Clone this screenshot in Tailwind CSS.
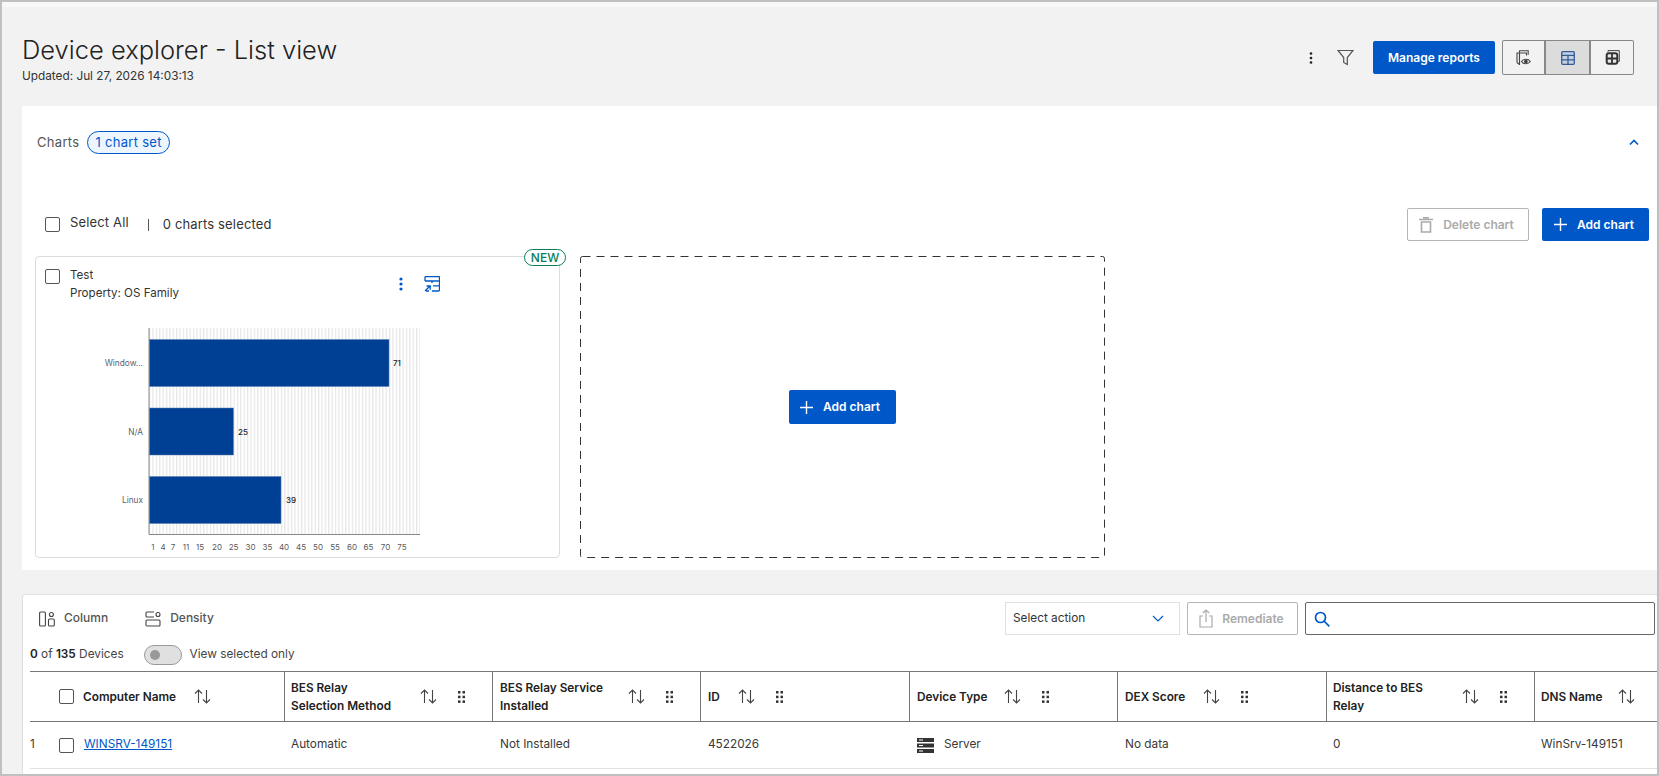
<!DOCTYPE html>
<html><head><meta charset="utf-8"><script src="https://cdn.jsdelivr.net/npm/@tailwindcss/browser@4"></script></head>
<body class="font-['Inter',sans-serif] text-[#333] overflow-hidden">
<div class="w-[1659px] h-[776px] border-2 border-[#c0c0c0] bg-[#f2f2f2] overflow-hidden">
  <div class="h-[5px] bg-[#f8f8f8]"></div>
  <header class="h-[99px] pl-5 pr-[23px] flex items-start justify-between">
    <div class="pt-[27px]">
      <h1 class="text-[25.500px] leading-8 font-light text-[#222]">Device explorer - List view</h1>
      <p class="mt-[2px] text-[11.800px] leading-4 text-[#333]">Updated: Jul 27, 2026 14:03:13</p>
    </div>
    <div class="mt-[33px] h-[35px] flex items-center">
      <svg class="w-4 h-4 mr-[18px]" viewBox="0 0 16 16" fill="#222"><circle cx="8" cy="3.500" r="1.300"/><circle cx="8" cy="8" r="1.300"/><circle cx="8" cy="12.500" r="1.300"/></svg>
      <svg class="w-[17px] h-[17px] mr-[19px]" viewBox="0 0 17 17" fill="none" stroke="#555" stroke-width="1.200"><path d="M1 1.500h15l-5.700 7v7l-3.600-2v-5z"/></svg>
      <button class="w-[122px] h-[33px] rounded-[2px] bg-[#0058c8] text-white text-xs font-semibold mr-[7px]">Manage reports</button>
      <div class="flex h-[35px]">
        <div class="w-[44px] border border-r-2 border-[#888] rounded-l-[2px] flex items-center justify-center"><svg class="w-[15px] h-[15px]" viewBox="0 0 15 15" fill="none" stroke="#444" stroke-width="1.100"><path d="M3.500 2.800V.8h8.700v4"/><path d="M1 12.500V3h9.500v2.500M1 12.500l2.500 2V3"/><path d="M5.500 11.500c1.700-3 6.700-3 8.800 0-2.100 3-7.100 3-8.800 0z" fill="#f2f2f2"/><circle cx="9.900" cy="11.500" r="1.300" fill="#333"/></svg></div>
        <div class="w-[43px] border-y border-[#888] bg-[#dcdcdc] flex items-center justify-center"><svg class="w-[14px] h-[14px]" viewBox="0 0 14 14" fill="#c5d0e0" stroke="#345c94" stroke-width="1.300"><rect x=".7" y=".7" width="12.600" height="12.600" rx="1"/><path d="M.7 4.300h12.600M.7 8.800h12.600M7 4.300v9"/></svg></div>
        <div class="w-[45px] border border-l-2 border-[#888] rounded-r-[2px] flex items-center justify-center"><svg class="w-[15px] h-[15px]" viewBox="0 0 15 15" fill="none" stroke="#444" stroke-width="1"><path d="M3 1.800V.6h11.300v10.800h-1.200"/><rect x="1.700" y="3.200" width="10.600" height="10.600" rx="2" fill="#e8e8e8" stroke="#333" stroke-width="2"/><path d="M2 8.500h10M7 3.500v10" stroke="#333" stroke-width="1.800"/></svg></div>
      </div>
    </div>
  </header>

  <section class="ml-5 h-[464px] bg-white">
    <div class="h-[102px] pt-[25px] pl-[15px] pr-[18px] flex items-start justify-between">
      <div class="flex items-center h-[23px]">
        <span class="text-[13px] text-[#555] tracking-[.3px]">Charts</span>
        <span class="ml-2 h-[23px] px-[7px] flex items-center rounded-full border border-[#0058c8] bg-[#edf5ff] text-[13px] text-[#0058c8] tracking-[.3px]">1 chart set</span>
      </div>
      <svg class="w-[10px] h-[7px] mt-2" viewBox="0 0 10 7" fill="none" stroke="#0058c8" stroke-width="1.600"><path d="M1 5.500 5 1.500l4 4"/></svg>
    </div>
    <div class="h-[33px] mb-[15px] pl-[23px] pr-2 flex items-center">
      <span class="w-[15px] h-[15px] rounded-[2px] border border-[#555] bg-white"></span>
      <span class="ml-[10px] -mt-[4px] text-[13px] text-[#333] tracking-[.15px]">Select All</span>
      <span class="ml-[19px] w-px h-[12px] bg-[#555]"></span>
      <span class="ml-[14px] text-[13px] text-[#333] tracking-[.15px]">0 charts selected</span>
      <button class="ml-auto w-[122px] h-[33px] rounded-[2px] border border-[#b5b5b5] flex items-center justify-center gap-[10px] pr-[3px] text-xs font-semibold text-[#aaa]">
        <svg class="w-[14px] h-[16px]" viewBox="0 0 14 16" fill="none" stroke="#aaa" stroke-width="1.600"><path d="M0 2.500h14M4 .8h6M2.500 5h9v10h-9z"/></svg>Delete chart</button>
      <button class="ml-[13px] w-[107px] h-[33px] rounded-[2px] bg-[#0058c8] flex items-center justify-center gap-[10px] pr-[3px] text-xs font-semibold text-white">
        <svg class="w-[13px] h-[13px]" viewBox="0 0 13 13" fill="none" stroke="#fff" stroke-width="1.400"><path d="M6.500 0v13M0 6.500h13"/></svg>Add chart</button>
    </div>
    <div class="pl-[13px] flex gap-[20px]">
      <article class="relative w-[525px] h-[302px] rounded border border-[#dcdcdc] bg-white">
        <span class="absolute -top-[8px] left-[488px] w-[42px] h-[17px] flex items-center justify-center rounded-full border border-[#0a7d5a] bg-white text-xs font-medium text-[#0a7d5a]">NEW</span>
        <div class="flex pl-[9px] pt-[11px]">
          <span class="w-[15px] h-[15px] mt-px rounded-[2px] border border-[#555]"></span>
          <div class="ml-[10px] -mt-[2px] text-[11.600px] leading-[18px] text-[#333] w-[328px]"><p>Test</p><p>Property: OS Family</p></div>
          <svg class="w-[6px] h-[14px] mt-[9px]" viewBox="0 0 6 14" fill="#0058c8"><circle cx="3" cy="2" r="1.600"/><circle cx="3" cy="7" r="1.600"/><circle cx="3" cy="12" r="1.600"/></svg>
          <svg class="ml-[20px] mt-[8px] w-[16px] h-[16px]" viewBox="0 0 16 16" fill="none" stroke="#0058c8" stroke-width="1.300"><path d="M5 15H2M1 5V1.500a1 1 0 0 1 1-1h12.500a1 1 0 0 1 1 1V14a1 1 0 0 1-1 1H8M1 5h14.500M9 9.800h6.500M8 5v2"/><path d="M1 15 6 10M2.500 10H6.200v3.700"/></svg>
        </div>
        <svg class="absolute -left-px -top-px" width="524" height="301" viewBox="35 256 524 301">
          <defs><pattern id="stripes" x="149" y="0" width="3.380" height="10" patternUnits="userSpaceOnUse"><rect width="3.380" height="10" fill="#fff"/><rect x="0" width="1.200" height="10" fill="#e6e6e6"/></pattern></defs>
          <rect x="149" y="328" width="271" height="206" fill="url(#stripes)"/>
          <path d="M149 328V534.500H420" fill="none" stroke="#888" stroke-width="1"/>
          <g fill="#004094" stroke="#5c7fb5" stroke-width=".5"><rect x="149.500" y="339.500" width="239.500" height="47"/><rect x="149.500" y="408" width="84" height="47"/><rect x="149.500" y="476.500" width="131.500" height="47"/></g>
          <g font-family="Inter, sans-serif" font-size="8.300" fill="#5a6270" text-anchor="end"><text x="143" y="366">Window...</text><text x="143" y="435">N/A</text><text x="143" y="503">Linux</text></g>
          <g font-family="Inter, sans-serif" font-size="8" fill="#222" font-weight="500"><text x="393" y="366">71</text><text x="238" y="435">25</text><text x="286" y="503">39</text></g>
          <g font-family="Inter, sans-serif" font-size="8" fill="#5a5a5a" text-anchor="middle"><text x="153" y="550">1</text><text x="163" y="550">4</text><text x="173" y="550">7</text><text x="186" y="550">11</text><text x="200" y="550">15</text><text x="217" y="550">20</text><text x="233.500" y="550">25</text><text x="250.500" y="550">30</text><text x="267.500" y="550">35</text><text x="284" y="550">40</text><text x="301" y="550">45</text><text x="318" y="550">50</text><text x="335" y="550">55</text><text x="352" y="550">60</text><text x="368.500" y="550">65</text><text x="385.500" y="550">70</text><text x="402" y="550">75</text></g>
        </svg>
      </article>
      <div class="relative w-[525px] h-[302px] flex items-center justify-center">
        <svg class="absolute inset-0" width="525" height="302"><rect x=".5" y=".5" width="524" height="301" rx="2" fill="none" stroke="#333" stroke-dasharray="8 6"/></svg>
        <button class="relative w-[107px] h-[34px] rounded-[2px] bg-[#0058c8] flex items-center justify-center gap-[10px] pr-[5px] text-xs font-semibold text-white">
          <svg class="w-[13px] h-[13px]" viewBox="0 0 13 13" fill="none" stroke="#fff" stroke-width="1.400"><path d="M6.500 0v13M0 6.500h13"/></svg>Add chart</button>
      </div>
    </div>
  </section>

  <section class="mt-6 ml-5 h-[180px] bg-white rounded-tl border-t border-l border-[#e0e0e0]">
    <div class="h-[33px] mt-[7px] pl-4 pr-[2px] flex items-center">
      <svg class="w-[16px] h-[16px]" viewBox="0 0 16 16" fill="none" stroke="#444" stroke-width="1.100"><rect x=".6" y="1" width="5.800" height="14" rx="1"/><rect x="9.500" y="8" width="5.800" height="7" rx="1"/><circle cx="12.400" cy="3.500" r="2"/></svg>
      <span class="ml-[9px] -mt-px text-xs font-medium text-[#555]">Column</span>
      <svg class="ml-[37px] w-[16px] h-[16px]" viewBox="0 0 16 16" fill="none" stroke="#444" stroke-width="1.100"><path d="M9 1H2a1 1 0 0 0-1 1v3a1 1 0 0 0 1 1h7"/><rect x="1" y="9" width="14" height="6" rx="1"/><circle cx="13" cy="3.500" r="2"/></svg>
      <span class="ml-[9px] -mt-px text-xs font-medium text-[#555]">Density</span>
      <div class="ml-auto flex gap-[7px] items-stretch h-[33px]">
        <div class="w-[175px] border border-[#e0e0e0] pl-[7px] pr-[15px] flex items-center justify-between text-[11.800px] text-[#333]">Select action<svg class="w-[12px] h-[7px]" viewBox="0 0 12 7" fill="none" stroke="#0058c8" stroke-width="1.100"><path d="M1 1l5 5 5-5"/></svg></div>
        <div class="w-[111px] rounded-[2px] border border-[#b5b5b5] flex items-center justify-center gap-[9px] pr-[2px] text-xs font-semibold text-[#aaa]"><svg class="w-[14px] h-[19px]" viewBox="0 0 14 19" fill="none" stroke="#aaa" stroke-width="1.200"><path d="M4 7H1v11h12V7h-3M7 13V1M3.800 4 7 1l3.200 3"/></svg>Remediate</div>
        <div class="w-[350px] rounded-[2px] border border-[#666] flex items-center pl-2"><svg class="w-[16px] h-[16px]" viewBox="0 0 16 16" fill="none" stroke="#0058c8" stroke-width="1.700"><circle cx="6.500" cy="6.500" r="5"/><path d="M10 10l5.300 5.300"/></svg></div>
      </div>
    </div>
    <div class="h-[36px] pl-[7px] flex items-center pt-1 text-[11.800px] text-[#444]">
      <span><b class="font-semibold text-[#222]">0</b> of <b class="font-semibold text-[#222]">135</b> Devices</span>
      <span class="relative ml-[20px] w-[38px] h-[20px] rounded-full bg-[#e0e0e0] border border-[#999]"><span class="absolute left-[5px] top-[4px] w-[10px] h-[10px] rounded-full bg-[#999]"></span></span>
      <span class="ml-2">View selected only</span>
    </div>
    <div class="ml-[7px] text-[11.800px]">
      <div class="h-[51px] flex border-y border-[#777] font-semibold text-[#222] leading-[18px]">
        <div class="w-[254px] pl-[29px] flex items-center"><span class="w-[15px] h-[15px] rounded-[2px] border border-[#555]"></span><span class="ml-[9px]">Computer Name</span><svg class="ml-[18px] w-[17px] h-[15px]" viewBox="0 0 17 15" fill="none" stroke="#444" stroke-width="1.100"><path d="M4.500 14V1M1 4.500 4.500 1 8 4.500M12.500 1v13M9 10.500l3.500 3.500 3.500-3.500"/></svg></div>
        <div class="w-[208px] border-l border-[#777] pl-[6px] pr-[27px] flex items-center justify-between"><span class="w-[110px]">BES Relay Selection Method</span><span class="flex items-center gap-[21px]"><svg class="w-[17px] h-[15px]" viewBox="0 0 17 15" fill="none" stroke="#444" stroke-width="1.100"><path d="M4.500 14V1M1 4.500 4.500 1 8 4.500M12.500 1v13M9 10.500l3.500 3.500 3.500-3.500"/></svg><svg class="w-[7px] h-[12px]" viewBox="0 0 7 12" fill="#333"><rect width="2.500" height="2.500"/><rect x="4.500" width="2.500" height="2.500"/><rect y="4.700" width="2.500" height="2.500"/><rect x="4.500" y="4.700" width="2.500" height="2.500"/><rect y="9.400" width="2.500" height="2.500"/><rect x="4.500" y="9.400" width="2.500" height="2.500"/></svg></span></div>
        <div class="w-[208px] border-l border-[#777] pl-[7px] pr-[27px] flex items-center justify-between"><span class="w-[115px]">BES Relay Service Installed</span><span class="flex items-center gap-[21px]"><svg class="w-[17px] h-[15px]" viewBox="0 0 17 15" fill="none" stroke="#444" stroke-width="1.100"><path d="M4.500 14V1M1 4.500 4.500 1 8 4.500M12.500 1v13M9 10.500l3.500 3.500 3.500-3.500"/></svg><svg class="w-[7px] h-[12px]" viewBox="0 0 7 12" fill="#333"><rect width="2.500" height="2.500"/><rect x="4.500" width="2.500" height="2.500"/><rect y="4.700" width="2.500" height="2.500"/><rect x="4.500" y="4.700" width="2.500" height="2.500"/><rect y="9.400" width="2.500" height="2.500"/><rect x="4.500" y="9.400" width="2.500" height="2.500"/></svg></span></div>
        <div class="w-[209px] border-l border-[#777] pl-[7px] flex items-center"><span>ID</span><span class="ml-[18px] flex items-center gap-[21px]"><svg class="w-[17px] h-[15px]" viewBox="0 0 17 15" fill="none" stroke="#444" stroke-width="1.100"><path d="M4.500 14V1M1 4.500 4.500 1 8 4.500M12.500 1v13M9 10.500l3.500 3.500 3.500-3.500"/></svg><svg class="w-[7px] h-[12px]" viewBox="0 0 7 12" fill="#333"><rect width="2.500" height="2.500"/><rect x="4.500" width="2.500" height="2.500"/><rect y="4.700" width="2.500" height="2.500"/><rect x="4.500" y="4.700" width="2.500" height="2.500"/><rect y="9.400" width="2.500" height="2.500"/><rect x="4.500" y="9.400" width="2.500" height="2.500"/></svg></span></div>
        <div class="w-[208px] border-l border-[#777] pl-[7px] flex items-center"><span>Device Type</span><span class="ml-[17px] flex items-center gap-[21px]"><svg class="w-[17px] h-[15px]" viewBox="0 0 17 15" fill="none" stroke="#444" stroke-width="1.100"><path d="M4.500 14V1M1 4.500 4.500 1 8 4.500M12.500 1v13M9 10.500l3.500 3.500 3.500-3.500"/></svg><svg class="w-[7px] h-[12px]" viewBox="0 0 7 12" fill="#333"><rect width="2.500" height="2.500"/><rect x="4.500" width="2.500" height="2.500"/><rect y="4.700" width="2.500" height="2.500"/><rect x="4.500" y="4.700" width="2.500" height="2.500"/><rect y="9.400" width="2.500" height="2.500"/><rect x="4.500" y="9.400" width="2.500" height="2.500"/></svg></span></div>
        <div class="w-[209px] border-l border-[#777] pl-[7px] flex items-center"><span>DEX Score</span><span class="ml-[18px] flex items-center gap-[21px]"><svg class="w-[17px] h-[15px]" viewBox="0 0 17 15" fill="none" stroke="#444" stroke-width="1.100"><path d="M4.500 14V1M1 4.500 4.500 1 8 4.500M12.500 1v13M9 10.500l3.500 3.500 3.500-3.500"/></svg><svg class="w-[7px] h-[12px]" viewBox="0 0 7 12" fill="#333"><rect width="2.500" height="2.500"/><rect x="4.500" width="2.500" height="2.500"/><rect y="4.700" width="2.500" height="2.500"/><rect x="4.500" y="4.700" width="2.500" height="2.500"/><rect y="9.400" width="2.500" height="2.500"/><rect x="4.500" y="9.400" width="2.500" height="2.500"/></svg></span></div>
        <div class="w-[208px] border-l border-[#777] pl-[6px] pr-[27px] flex items-center justify-between"><span class="w-[100px]">Distance to BES Relay</span><span class="flex items-center gap-[21px]"><svg class="w-[17px] h-[15px]" viewBox="0 0 17 15" fill="none" stroke="#444" stroke-width="1.100"><path d="M4.500 14V1M1 4.500 4.500 1 8 4.500M12.500 1v13M9 10.500l3.500 3.500 3.500-3.500"/></svg><svg class="w-[7px] h-[12px]" viewBox="0 0 7 12" fill="#333"><rect width="2.500" height="2.500"/><rect x="4.500" width="2.500" height="2.500"/><rect y="4.700" width="2.500" height="2.500"/><rect x="4.500" y="4.700" width="2.500" height="2.500"/><rect y="9.400" width="2.500" height="2.500"/><rect x="4.500" y="9.400" width="2.500" height="2.500"/></svg></span></div>
        <div class="flex-1 border-l border-[#777] pl-[6px] flex items-center"><span>DNS Name</span><svg class="ml-[16px] w-[17px] h-[15px]" viewBox="0 0 17 15" fill="none" stroke="#444" stroke-width="1.100"><path d="M4.500 14V1M1 4.500 4.500 1 8 4.500M12.500 1v13M9 10.500l3.500 3.500 3.500-3.500"/></svg></div>
      </div>
      <div class="h-[47px] flex items-center border-b border-[#e0e0e0] text-[#393939]">
        <div class="w-[254px] flex items-center"><span class="w-[29px]">1</span><span class="w-[15px] h-[15px] rounded-[2px] border border-[#555]"></span><a class="ml-[10px] text-[#0058c8] underline">WINSRV-149151</a></div>
        <div class="w-[208px] pl-[7px]">Automatic</div>
        <div class="w-[208px] pl-[8px]">Not Installed</div>
        <div class="w-[209px] pl-[8px]">4522026</div>
        <div class="w-[208px] pl-[8px] flex items-center"><svg class="w-[17px] h-[15px]" viewBox="0 0 17 15" fill="#333"><rect width="17" height="4"/><rect y="5.500" width="17" height="4"/><rect y="11" width="17" height="4"/><rect x="2" y="1.500" width="4" height="1" fill="#fff"/><rect x="2" y="7" width="4" height="1" fill="#fff"/><rect x="2" y="12.500" width="4" height="1" fill="#fff"/></svg><span class="ml-[10px]">Server</span></div>
        <div class="w-[209px] pl-[8px]">No data</div>
        <div class="w-[208px] pl-[7px]">0</div>
        <div class="flex-1 pl-[7px]">WinSrv-149151</div>
      </div>
    </div>
  </section>
</div>
</body></html>
